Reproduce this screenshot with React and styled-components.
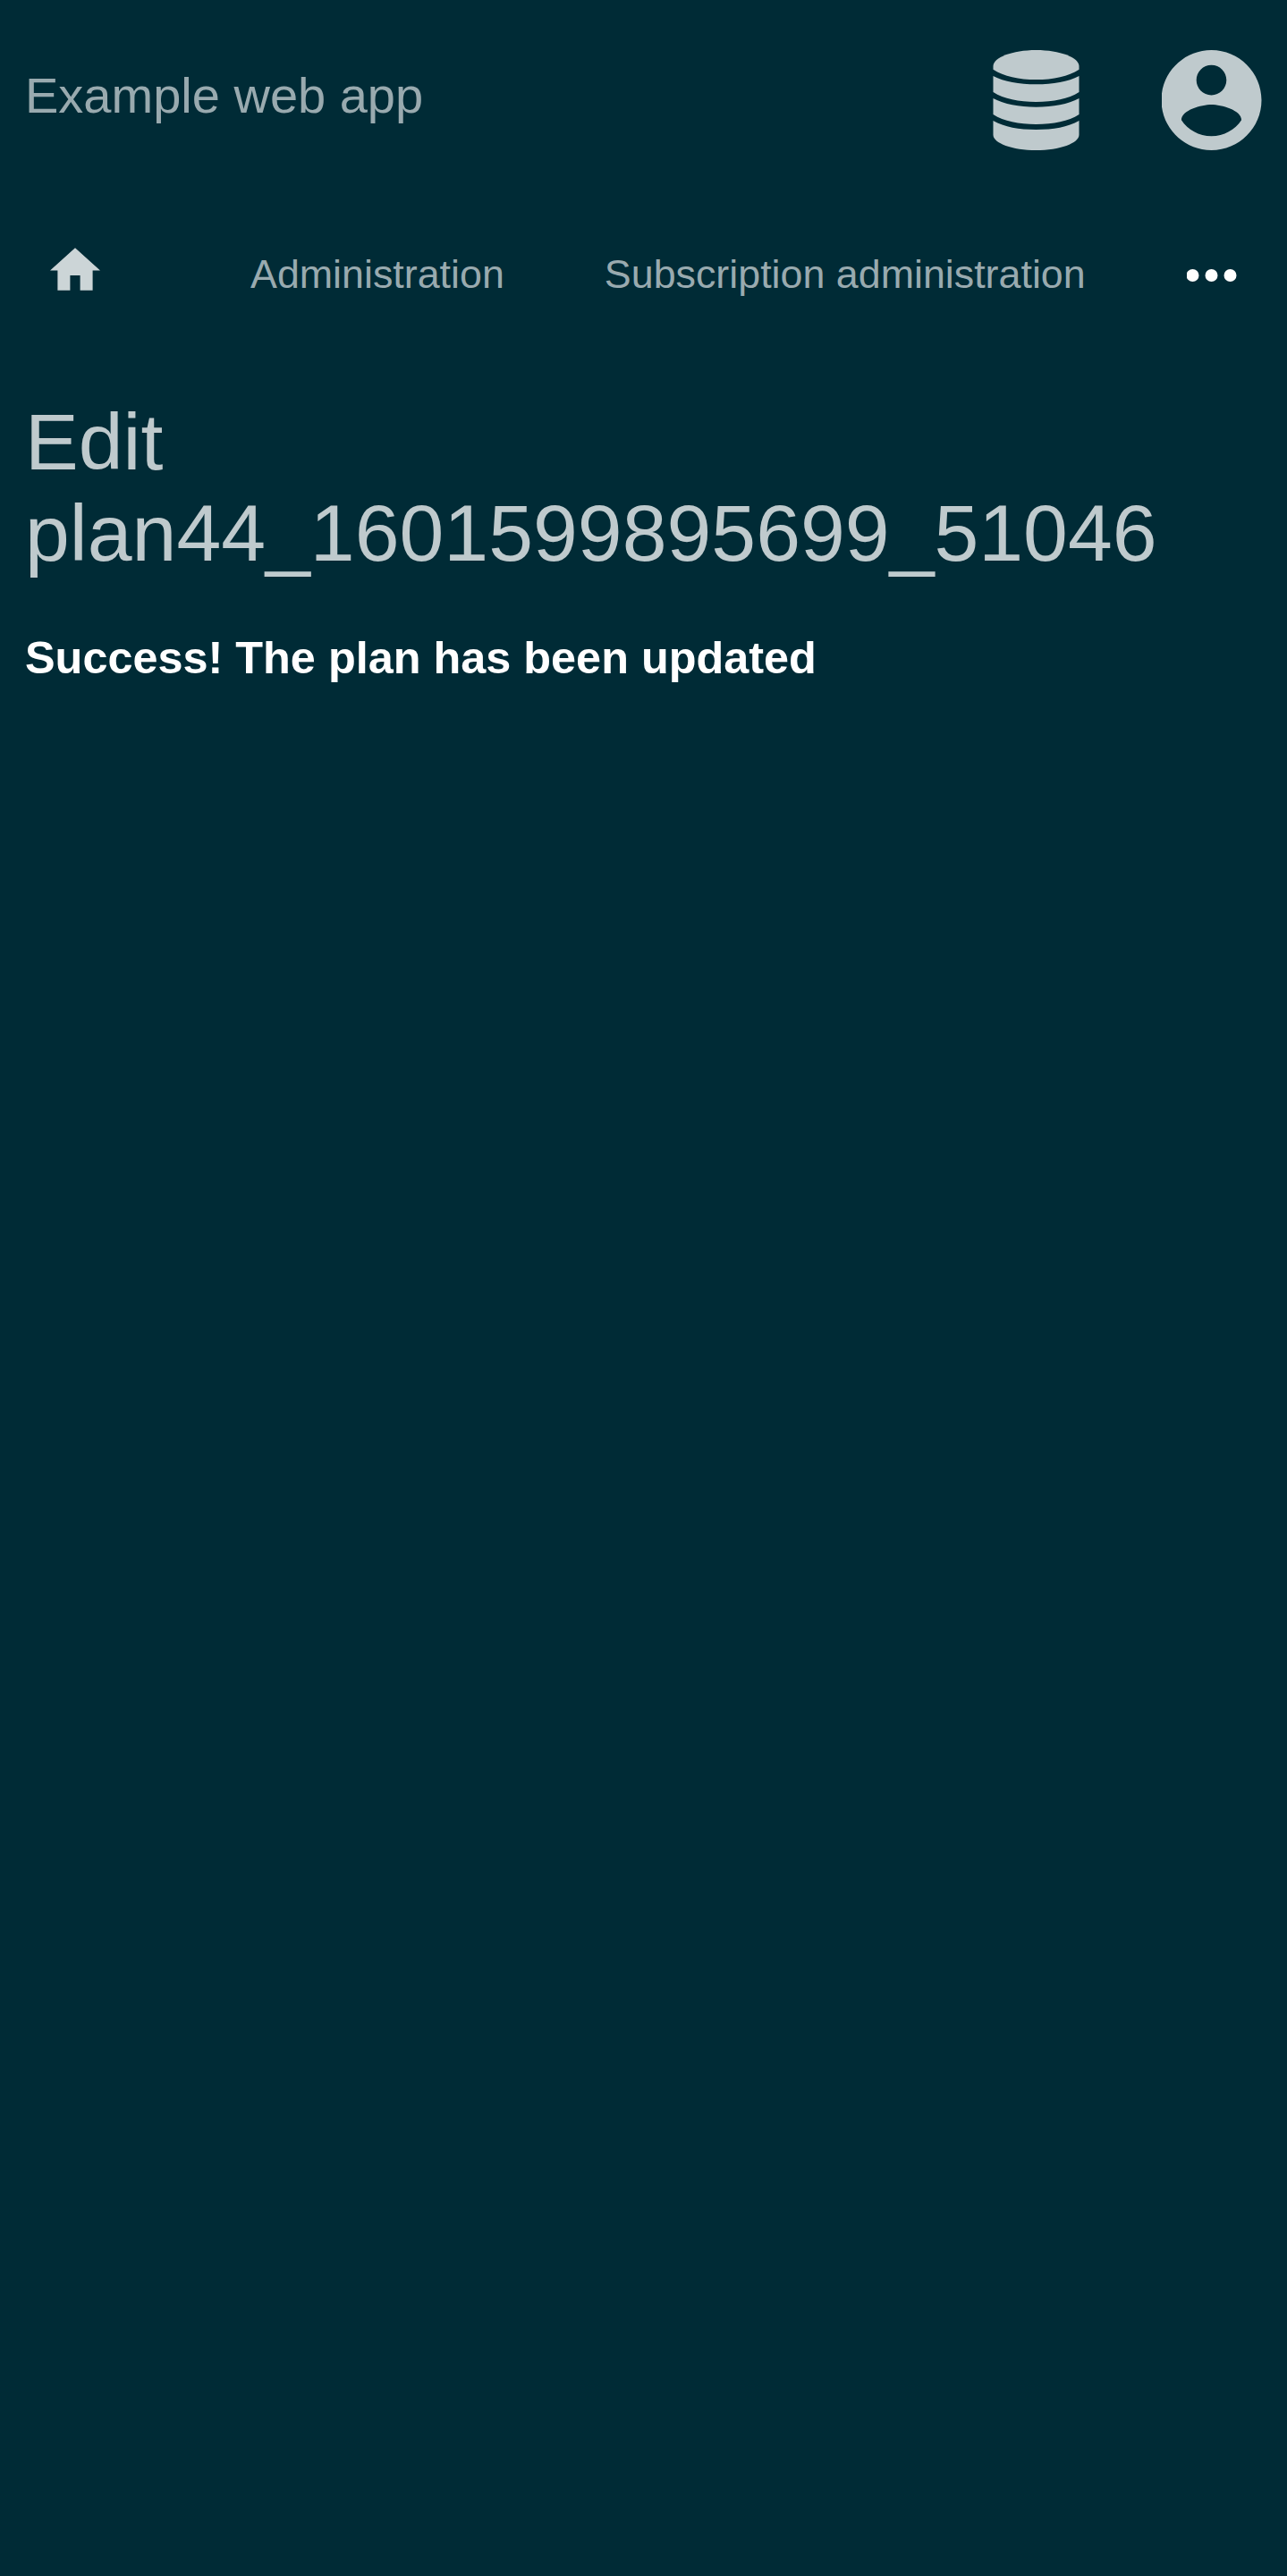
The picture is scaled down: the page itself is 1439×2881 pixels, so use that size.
import React from "react";
import styled, { createGlobalStyle } from "styled-components";

const GlobalStyle = createGlobalStyle`
  body {
    margin: 0;
    background: #002b36;
    font-family: "Liberation Sans", Arial, sans-serif;
  }
`;

const Page = styled.div`
  min-height: 2881px;
  background: #002b36;
  color: #fff;
`;

const Header = styled.header`
  display: flex;
  align-items: center;
  height: 224px;
  padding: 0 28px;
  box-sizing: border-box;
`;

const Brand = styled.div`
  flex: 1;
  padding-bottom: 10px;
  font-size: 56px;
  line-height: 64px;
  color: #99aaaf;
`;

const HeaderIcons = styled.div`
  display: flex;
  align-items: center;
  gap: 92px;
  color: #bfcacd;
`;

const Icon = styled.svg`
  display: block;
  width: ${(p) => p.$w}px;
  height: ${(p) => p.$h}px;
  fill: currentColor;
`;

const Nav = styled.nav`
  display: flex;
  align-items: center;
  height: 168px;
  padding: 0 56px;
  box-sizing: border-box;
`;

const HomeLink = styled.a`
  margin-right: 168px;
  padding-bottom: 14px;
  color: #ccd5d7;
`;

const NavLink = styled.a`
  margin-right: 112px;
  padding-bottom: 4px;
  font-size: 44.8px;
  line-height: 52px;
  color: #99aaaf;
  white-space: nowrap;
`;

const MoreButton = styled.a`
  margin-left: auto;
`;

const Content = styled.main`
  padding: 51px 28px;
`;

const Title = styled.h1`
  margin: 0;
  font-size: 89.6px;
  font-weight: 400;
  line-height: 102px;
  color: #bfcacd;
`;

const Message = styled.p`
  margin: 60px 0 0;
  font-size: 50.4px;
  font-weight: 700;
  line-height: 58px;
`;

export default function App() {
  return (
    <Page>
      <GlobalStyle />
      <Header>
        <Brand>Example web app</Brand>
        <HeaderIcons>
          <Icon $w={97} $h={112} viewBox="-1.5 0 294 336" preserveAspectRatio="none">
            <path d="M0 54C0 25 65 0 145.500 0S291 25 291 54V65C255 88 204 99 145.500 99S36 88 0 65Z" />
            <path d="M0 87C38 106 87 115 145.500 115S253 106 291 87V141C255 164 204 174 145.500 174S36 164 0 141Z" />
            <path d="M0 162C38 182 87 191 145.500 191S253 182 291 162V216C255 239 204 249 145.500 249S36 239 0 216Z" />
            <path d="M0 237C38 258 87 267 145.500 267S253 258 291 237V284C291 312 226 336 145.500 336S0 312 0 284Z" />
          </Icon>
          <Icon $w={112} $h={112} viewBox="2.09 2 20 20">
            <path d="M12 2C6.480 2 2 6.480 2 12s4.480 10 10 10 10-4.480 10-10S17.520 2 12 2zm0 3c1.660 0 3 1.340 3 3s-1.340 3-3 3-3-1.340-3-3 1.340-3 3-3zm0 14.200c-2.500 0-4.710-1.280-6-3.220.030-1.990 4-3.080 6-3.080 1.990 0 5.970 1.090 6 3.080-1.290 1.940-3.500 3.220-6 3.220z" />
          </Icon>
        </HeaderIcons>
      </Header>
      <Nav>
        <HomeLink>
          <Icon $w={56} $h={48} viewBox="2 3 20 17">
            <path d="M10 20v-6h4v6h5v-8h3L12 3 2 12h3v8z" />
          </Icon>
        </HomeLink>
        <NavLink>Administration</NavLink>
        <NavLink>Subscription administration</NavLink>
        <MoreButton>
          <Icon $w={56} $h={14} viewBox="0.5 0 56 14">
            <circle cx="7" cy="7" r="7" />
            <circle cx="28" cy="7" r="7" />
            <circle cx="49" cy="7" r="7" />
          </Icon>
        </MoreButton>
      </Nav>
      <Content>
        <Title>
          Edit
          <br />
          plan44_1601599895699_51046
        </Title>
        <Message>Success! The plan has been updated</Message>
      </Content>
    </Page>
  );
}
